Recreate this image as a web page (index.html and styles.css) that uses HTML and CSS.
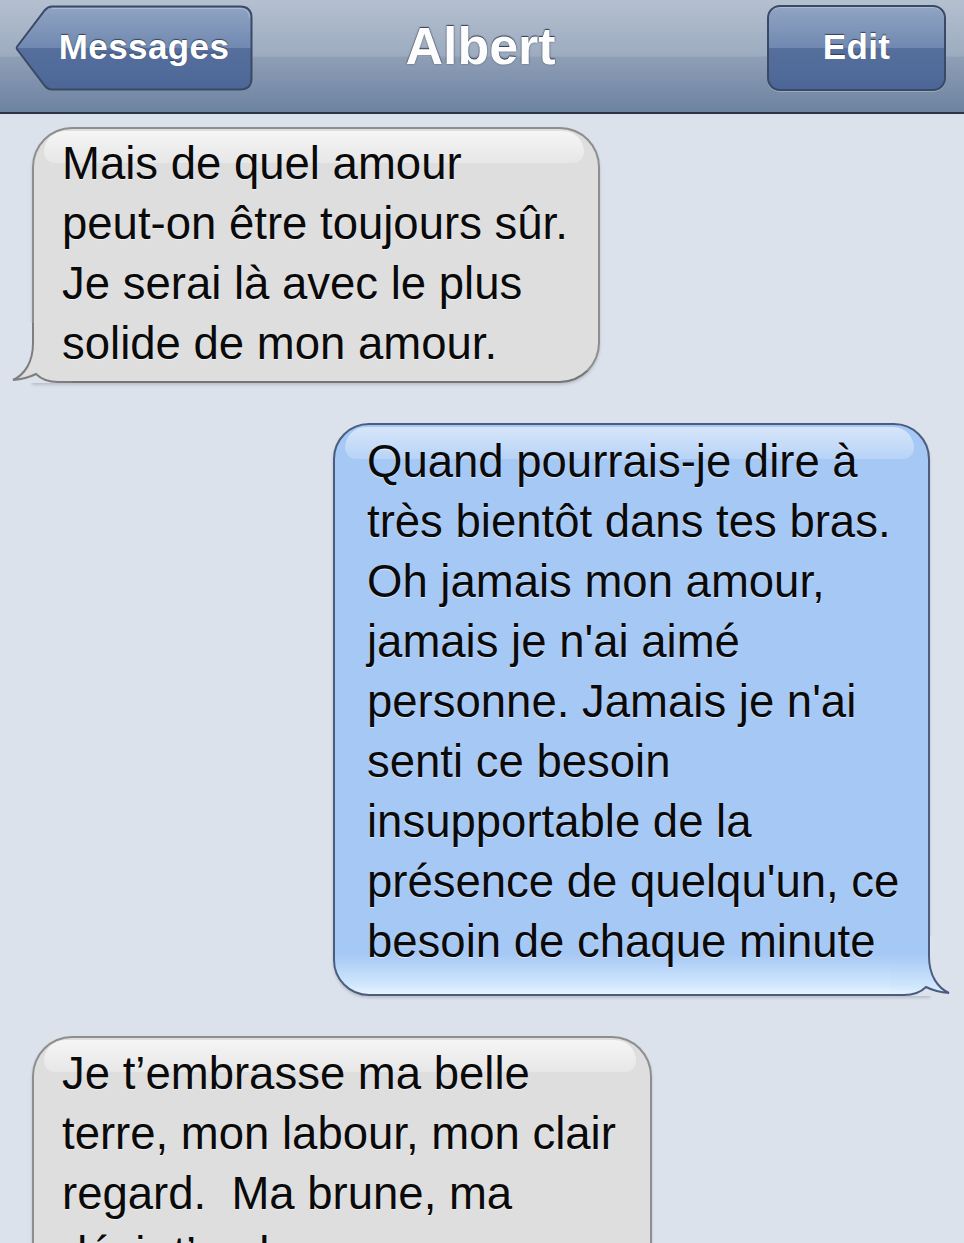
FILE: index.html
```html
<!DOCTYPE html>
<html lang="fr">
<head>
<meta charset="utf-8">
<title>Albert</title>
<link rel="stylesheet" href="styles.css">
</head>
<body>
<header class="navbar">
  <div class="nav-left">
    <a class="back-btn">
      <svg class="back-bg" width="238" height="86" viewBox="0 0 238 86" aria-hidden="true">
        <defs>
          <linearGradient id="btnGrad" x1="0" y1="0" x2="0" y2="1">
            <stop offset="0" stop-color="#90a4c3"/>
            <stop offset="0.5" stop-color="#7189b1"/>
            <stop offset="0.5" stop-color="#566f9d"/>
            <stop offset="1" stop-color="#4c6797"/>
          </linearGradient>
        </defs>
        <path d="M37 1.5 L225 1.5 Q236.5 1.5 236.5 13 L236.5 73 Q236.5 84.5 225 84.5 L37 84.5 Q33 84.5 30 81 L2.2 44.5 Q1.2 43 2.2 41.5 L30 5 Q33 1.5 37 1.5 Z" fill="url(#btnGrad)" stroke="#3a4a66" stroke-width="2"/>
        <path d="M37 3.5 L225 3.5 Q234.5 3.5 234.5 13" fill="none" stroke="rgba(255,255,255,0.25)" stroke-width="1"/>
      </svg>
      <span class="btn-label">Messages</span>
    </a>
  </div>
  <h1 class="nav-title">Albert</h1>
  <div class="nav-right">
    <a class="edit-btn"><span class="btn-label">Edit</span></a>
  </div>
</header>

<main class="thread">
  <div class="bubble bubble-in b1">
    <svg class="tail tail-in" width="60" height="60" viewBox="0 0 60 60" aria-hidden="true">
      <rect x="0" y="0" width="60" height="60" fill="#dbe2ec"/>
      <path d="M21 0 L21 20 C21 40 12 52 1 57 Q14 56 24 51 C30 57 36 59 46 59 L60 59 L60 0 Z" fill="#dedede"/>
      <path d="M21 0 L21 20 C21 40 12 52 1 57 Q14 56 24 51 C30 57 36 59 46 59 L60 59" fill="none" stroke="#7e7e7e" stroke-width="2"/>
    </svg>
    <p class="bubble-text">Mais de quel amour<br>peut-on être toujours sûr.<br>Je serai là avec le plus<br>solide de mon amour.</p>
  </div>

  <div class="bubble bubble-out b2">
    <svg class="tail tail-out" width="60" height="60" viewBox="0 0 60 60" aria-hidden="true">
      <defs>
        <linearGradient id="blueTail" gradientUnits="userSpaceOnUse" x1="0" y1="0" x2="0" y2="60">
          <stop offset="0.3" stop-color="#a6c8f5"/>
          <stop offset="0.83" stop-color="#cfe6fd"/>
          <stop offset="1" stop-color="#e8f5ff"/>
        </linearGradient>
      </defs>
      <rect x="0" y="0" width="60" height="60" fill="#dbe2ec"/>
      <path d="M21 0 L21 20 C21 40 12 52 1 57 Q14 56 24 51 C30 57 36 59 46 59 L60 59 L60 0 Z" fill="url(#blueTail)"/>
      <path d="M21 0 L21 20 C21 40 12 52 1 57 Q14 56 24 51 C30 57 36 59 46 59 L60 59" fill="none" stroke="#4b5d7f" stroke-width="2"/>
    </svg>
    <p class="bubble-text">Quand pourrais-je dire à<br>très bientôt dans tes bras.<br>Oh jamais mon amour,<br>jamais je n'ai aimé<br>personne. Jamais je n'ai<br>senti ce besoin<br>insupportable de la<br>présence de quelqu'un, ce<br>besoin de chaque minute</p>
  </div>

  <div class="bubble bubble-in b3">
    <p class="bubble-text">Je t’embrasse ma belle<br>terre, mon labour, mon clair<br>regard.&nbsp; Ma brune, ma<br>désir t’embrasse</p>
  </div>
</main>
</body>
</html>
```

FILE: styles.css
```css
html, body {
  margin: 0;
  padding: 0;
}

body {
  width: 964px;
  height: 1243px;
  overflow: hidden;
  background: #dbe2ec;
  font-family: "Liberation Sans", Arial, Helvetica, sans-serif;
}

/* ---------- navigation bar ---------- */
.navbar {
  height: 112px;
  border-bottom: 2px solid #2c3543;
  background: linear-gradient(180deg, #b4c0d0 0%, #9dabc0 50%, #8e9eb5 51%, #6d83a2 100%);
  display: grid;
  grid-template-columns: 1fr auto 1fr;
  padding: 0 18px 0 15px;
}

.nav-left {
  justify-self: start;
}

.nav-right {
  justify-self: end;
}

.back-btn,
.edit-btn {
  display: flex;
  align-items: center;
  justify-content: center;
  height: 86px;
  margin-top: 5px;
  box-sizing: border-box;
  color: #fff;
  text-decoration: none;
}

.back-btn {
  position: relative;
  width: 238px;
  padding-left: 20px;
}

.back-bg {
  position: absolute;
  left: 0;
  top: 0;
}

.edit-btn {
  width: 179px;
  border: 2px solid #3a4a66;
  border-radius: 13px;
  background: linear-gradient(180deg, #90a4c3 0%, #7189b1 50%, #566f9d 50%, #4c6797 100%);
  box-shadow: inset 0 1px 0 rgba(255, 255, 255, 0.25), 0 1px 0 rgba(255, 255, 255, 0.25);
}

.btn-label {
  position: relative;
  font-size: 35px;
  font-weight: bold;
  letter-spacing: 0.4px;
  line-height: 1;
  margin-top: -3px;
  text-shadow: 0 -1px 1px rgba(30, 40, 60, 0.75);
}

.nav-title {
  margin: 0;
  font-size: 52px;
  font-weight: bold;
  line-height: 92px;
  color: #fdfdfd;
  text-shadow: 0 -1px 1px rgba(30, 40, 60, 0.8), 0 0 2px rgba(40, 50, 70, 0.6);
}

/* ---------- message thread ---------- */
.thread {
  display: flex;
  flex-direction: column;
  gap: 40px;
  padding-top: 13px;
}

.bubble {
  position: relative;
  box-sizing: border-box;
  border: 2px solid;
  border-radius: 40px;
  box-shadow: 0 2px 3px rgba(0, 0, 0, 0.15);
}

.bubble::before {
  content: "";
  position: absolute;
  top: 2px;
  left: 10px;
  right: 14px;
  height: 32px;
  border-radius: 30px 30px 16px 16px / 30px 30px 16px 16px;
  background: linear-gradient(180deg, rgba(255, 255, 255, 0.7), rgba(255, 255, 255, 0.28));
}

.bubble-in {
  align-self: flex-start;
  margin-left: 32px;
  background: #dedede;
  border-color: #8e8e8e #8e8e8e #767676 #8e8e8e;
  border-bottom-left-radius: 0;
}

.bubble-out {
  align-self: flex-end;
  margin-right: 34px;
  background: linear-gradient(180deg, #a6c8f5 0, #a6c8f5 calc(100% - 40px), #cfe6fd calc(100% - 10px), #e8f5ff 100%);
  border-color: #4b5d7f;
  border-radius: 36px;
  border-bottom-right-radius: 0;
}

.bubble-out::before {
  background: linear-gradient(180deg, rgba(255, 255, 255, 0.55), rgba(255, 255, 255, 0.2));
}

.b1 {
  width: 568px;
  padding: 5px 10px 7px 28px;
}

.b2 {
  width: 597px;
  padding: 7px 10px 22px 32px;
}

.b3 {
  width: 620px;
  padding: 6px 10px 9px 28px;
}

.bubble-text {
  position: relative;
  z-index: 2;
  margin: 0;
  font-size: 45.5px;
  line-height: 60px;
  white-space: nowrap;
  color: #0a0a0a;
  text-shadow: 0 1px 1px rgba(255, 255, 255, 0.6);
}

.tail {
  position: absolute;
  z-index: 1;
  bottom: -2px;
}

.tail-in {
  left: -22px;
}

.tail-out {
  right: -22px;
  transform: scaleX(-1);
}
```
